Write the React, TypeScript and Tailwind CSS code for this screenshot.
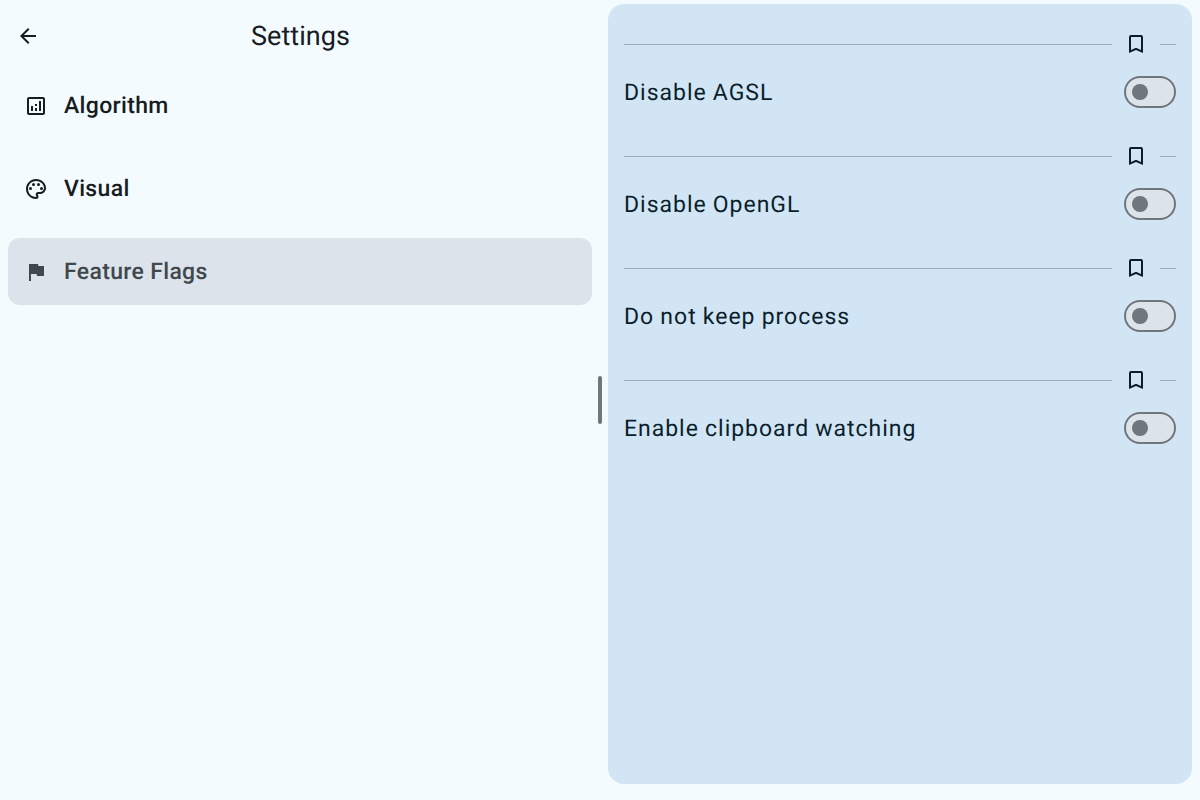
const flags = ["Disable AGSL", "Disable OpenGL", "Do not keep process", "Enable clipboard watching"];

const icons = {
  back: "M20 11H7.83l5.59-5.59L12 4l-8 8 8 8 1.41-1.41L7.83 13H20v-2z",
  chart: "M9 17H7v-5h2v5zm4 0h-2v-3h2v3zm0-5h-2v-2h2v2zm4 5h-2V7h2v10zm2 2H5V5h14v14zm0-16H5c-1.1 0-2 .9-2 2v14c0 1.1.9 2 2 2h14c1.1 0 2-.9 2-2V5c0-1.1-.9-2-2-2z",
  flag: "M14.4 6L14 4H5v17h2v-7h5.6l.4 2h7V6z",
  bookmark: "M17 3H7c-1.1 0-1.99.9-1.99 2L5 21l7-3 7 3V5c0-1.1-.9-2-2-2zm0 15l-5-2.18L7 18V5h10v13z",
};

function Icon({ path }: { path: string }) {
  return (
    <svg viewBox="0 0 24 24" fill="currentColor" className="size-6">
      <path d={path} />
    </svg>
  );
}

function PaletteIcon() {
  return (
    <svg viewBox="0 0 24 24" fill="currentColor" className="size-6">
      <path d="M12 22C6.49 22 2 17.51 2 12S6.49 2 12 2s10 4.04 10 9c0 3.31-2.69 6-6 6h-1.77c-.28 0-.5.22-.5.5 0 .12.05.23.13.33.41.47.64 1.06.64 1.67A2.5 2.5 0 0 1 12 22zm0-18c-4.41 0-8 3.59-8 8s3.59 8 8 8c.28 0 .5-.22.5-.5a.54.54 0 0 0-.14-.35c-.41-.46-.63-1.05-.63-1.65a2.5 2.5 0 0 1 2.5-2.5H16c2.21 0 4-1.79 4-4 0-3.86-3.59-7-8-7z" />
      <circle cx="6.5" cy="11.5" r="1.5" />
      <circle cx="9.5" cy="7.5" r="1.5" />
      <circle cx="14.5" cy="7.5" r="1.5" />
      <circle cx="17.5" cy="11.5" r="1.5" />
    </svg>
  );
}

export default function App() {
  return (
    <div className="flex h-[800px] w-[1200px] overflow-hidden bg-[#f3fbff] font-['Roboto',sans-serif] text-[#171c1f] [text-rendering:geometricPrecision]">
      <main className="w-[592px] pl-2">
        <header className="flex h-[72px] items-center">
          <button aria-label="Back" className="flex w-10 justify-center">
            <Icon path={icons.back} />
          </button>
          <h1 className="mr-[39px] grow text-center text-[27px] leading-9 tracking-[0.05px]">Settings</h1>
        </header>
        <nav className="flex flex-col gap-4 text-[23px] font-medium tracking-[0.33px]">
          <a className="flex h-[67px] items-center gap-4 px-4">
            <Icon path={icons.chart} />
            <span className="pt-px">Algorithm</span>
          </a>
          <a className="flex h-[67px] items-center gap-4 px-4">
            <PaletteIcon />
            <span className="pt-px">Visual</span>
          </a>
          <a className="flex h-[67px] items-center gap-4 rounded-xl bg-[#dce3ea] px-4 text-[#40484e]">
            <Icon path={icons.flag} />
            <span className="pt-px">Feature Flags</span>
          </a>
        </nav>
      </main>
      <div className="flex w-4 items-center justify-center">
        <div className="h-12 w-1 rounded-full bg-[#6f767c]" />
      </div>
      <section className="mt-1 mr-2 mb-4 grow rounded-2xl bg-[#d2e5f4] px-4 pt-4 text-[#0a1f2b]">
        {flags.map((name) => (
          <div key={name} className="h-28">
            <div className="flex h-12 items-center">
              <div className="h-px grow bg-[#9fadb6]" />
              <div className="flex w-12 justify-center">
                <Icon path={icons.bookmark} />
              </div>
              <div className="h-px w-4 bg-[#9fadb6]" />
            </div>
            <div className="flex h-12 items-center justify-between">
              <span className="pt-0.5 text-[23px] tracking-[0.98px] [word-spacing:-0.5px]">{name}</span>
              <button role="switch" aria-checked="false" aria-label={name} className="flex h-8 w-13 items-center rounded-full border-2 border-[#6f767c] bg-[#dce3ea] pl-1.5">
                <span className="size-4 rounded-full bg-[#6f767c]" />
              </button>
            </div>
          </div>
        ))}
      </section>
    </div>
  );
}
